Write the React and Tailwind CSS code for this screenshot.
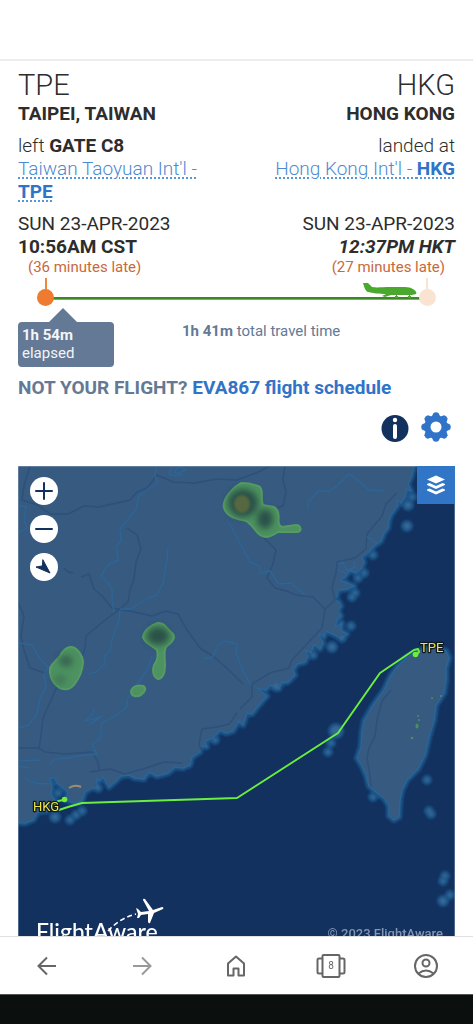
const ISLANDS = [
  [407, 526, 5],
  [373, 555, 4],
  [358, 578, 4],
  [364, 573, 4],
  [355, 593, 4],
  [352, 597, 4],
  [351, 626, 4],
  [342, 638, 4],
  [332, 647, 5],
  [313, 655, 4],
  [408, 505, 5],
  [412, 497, 4],
  [336, 731, 7],
  [331, 743, 4],
  [328, 752, 4],
  [373, 797, 4],
  [427, 780, 4],
  [429, 811, 4],
  [431, 814, 4],
  [445, 876, 4],
  [443, 881, 4],
  [450, 895, 4],
  [443, 901, 5],
  [58, 793, 4],
  [55, 817, 5],
  [70, 820, 4],
  [76, 815, 4],
  [82, 811, 4],
  [98, 788, 4],
  [276, 686, 5],
  [215, 740, 4],
];

const MAINLAND =
  "M10 460H416L411 478L408 484L411 491L407 489L405 497L401 503L397 500L398 505L391 515L389 520L388 528L384 533L381 541L374 546L369 552L362 557L364 562L361 569L356 573L350 570L345 577L340 580L347 583L354 586L347 589L338 590L337 596L334 600L339 602L341 606L338 611L341 616L337 620L335 627L342 623L341 631L347 634L341 639L335 635L326 631L324 637L318 633L323 643L320 649L314 644L311 653L305 650L308 656L305 662L297 664L293 670L295 675L288 682L281 683L279 689L270 685L266 690L257 688L267 696L259 705L252 714L247 713L243 725L239 721L233 731L226 733L220 730L213 738L205 741L207 747L200 746L200 752L192 757L190 765L183 768L175 767L168 773L157 776L149 772L144 779L135 778L129 775L121 776L115 782L109 787L103 777L99 781L96 778L98 788L92 788L85 792L82 801L74 803L66 800L68 792L62 787L57 783L55 778L50 778L52 786L51 795L56 802L47 811L38 812L33 820L25 823L10 822Z";

const TAIWAN =
  "M384 690L390 677L397 667L406 658L414 653L426 649L437 647L446 651L449 658L446 668L446 680L444 693L436 705L434 720L429 737L425 755L418 769L407 780L402 790L400 800L399 817L394 820L389 816L389 806L384 798L377 793L369 786L366 775L362 766L357 758L361 747L362 732L364 721L372 707Z";

const RIVERS = [
  "M156 466L155 476L158 483L149 488L139 496L136 509L129 518L120 529L121 541L116 547L118 560L108 565L101 576L112 588L112 600L114 612",
  "M120 610L119 621L112 640L110 651L105 655L105 664L96 672L88 674",
  "M168 547L167 560L163 583L157 595L149 598L138 604L131 609L120 609",
  "M18 643L32 645L39 657L48 667L44 675L46 687L40 698L37 714L29 725L18 728",
  "M152 656L148 669L139 681L133 690L127 700L127 707L118 714L102 723L100 739L92 744L97 754L79 756L67 758L55 759L50 764",
  "M228 521L239 541L250 562L259 566L261 573L270 571L279 584L291 583L305 595",
  "M308 509L308 502L319 491L329 491L337 486L349 474L357 480L369 490L383 491",
  "M203 658L212 658L218 645L225 641L237 644L236 652L243 671L251 685",
  "M18 505L26 507L24 520L27 528L18 533",
  "M94 708L93 714L85 721L101 717L90 724L97 719L103 715",
  "M18 761L40 760 M18 766L30 768 M24 777L31 782L42 784L49 783",
  "M172 467L169 474L176 476L181 472L186 470L180 466L174 472L183 476",
  "M367 537L372 539L377 544 M338 564L343 562L347 571L355 567L354 562 M338 570L346 573",
];

const BORDERS = [
  "M30 466L24 486L22 500L38 505L50 514L68 514L84 506L99 507L130 500L137 492L147 488L157 475L173 482L195 483L216 479L237 480L256 473L270 466",
  "M127 528L137 535L141 549L136 562L134 579L130 590L128 602L119 610L105 620L86 636L85 648L79 665L60 680L51 700L43 718L39 750",
  "M64 568L68 572L73 573 M81 577L89 574L94 589L103 597L112 608L135 612L152 616L166 611L178 614L187 630L200 648L214 657L230 671L243 684",
  "M18 602L24 616L21 636L24 650L30 668L45 673",
  "M285 466L283 480L286 491L283 506L270 510",
  "M264 538L276 550L273 564L267 578L275 588L287 591L296 595L313 597L325 609L322 628L306 645L292 660L289 668L270 673L252 684L252 697L240 709",
  "M325 609L335 600L332 587L336 573L337 562L355 558L366 549L367 534L382 516L386 504L397 493",
  "M237 713L229 724L217 727L202 729L199 744L201 750",
  "M18 748L39 748L45 752L65 754L92 752L98 762L99 770 M90 772L110 769L125 774L143 769L164 762L182 763",
  "M391 690L382 701L377 720L375 736L369 748L367 758L370 776L371 787",
];

function FlightMap() {
  return (
    <svg viewBox="18 466 437 480" className="block w-full" role="img" aria-label="Flight track from TPE to HKG">
      <defs>
        <filter id="soft" x="-20%" y="-20%" width="140%" height="140%">
          <feGaussianBlur stdDeviation="1" />
        </filter>
        <filter id="softer" x="-40%" y="-40%" width="180%" height="180%">
          <feGaussianBlur stdDeviation="3" />
        </filter>
      </defs>
      <rect x="18" y="466" width="437" height="480" fill="#12315f" />

      {/* shallow water around the coasts */}
      <g fill="#1f5588" stroke="#1f5588" strokeWidth="6" strokeLinejoin="round" filter="url(#soft)">
        <path d={MAINLAND} />
        <path d={TAIWAN} />
        {ISLANDS.map(([x, y, r]) => (
          <circle key={`${x}-${y}`} cx={x} cy={y} r={r} strokeWidth="2" />
        ))}
      </g>

      <g fill="#365a80" stroke="#2b6496" strokeWidth="1.4" strokeLinejoin="round">
        <path d={MAINLAND} />
        <path d={TAIWAN} />
      </g>
      <g fill="#376894" filter="url(#soft)">
        {ISLANDS.map(([x, y, r]) => (
          <circle key={`${x}-${y}`} cx={x} cy={y} r={r - 2} />
        ))}
      </g>

      <g fill="none" stroke="#2e507a" strokeWidth="1.5" strokeLinejoin="round">
        {BORDERS.map((d) => (
          <path key={d} d={d} />
        ))}
      </g>
      <g fill="none" stroke="#2d6596" strokeWidth="1.4" strokeLinejoin="round">
        {RIVERS.map((d) => (
          <path key={d} d={d} />
        ))}
      </g>

      {/* weather radar */}
      <g fill="#4d9260" stroke="#559c62" strokeWidth="2" strokeLinejoin="round">
        <path d="M241 483C248 483 254 484 260 487C264 492 260 499 263 505C268 507 275 504 278 512C280 518 276 524 282 527L296 525C301 525 302 531 298 532L278 532C272 536 266 539 260 535C254 530 251 523 246 521C239 519 227 518 224 508C222 500 232 488 241 483Z" />
        <path d="M158 623C164 622 167 629 173 634C176 639 171 643 167 646C163 649 165 657 165 666C165 674 162 679 158 679C153 677 152 670 154 665C158 660 158 654 157 650C152 645 144 643 143 637C144 631 150 625 158 623Z" />
        <path d="M70 647C76 646 83 655 83 663C82 674 78 680 74 685C70 690 63 691 57 686C52 682 49 675 50 668C53 662 57 660 60 656C62 652 65 648 70 647Z" />
        <path d="M131 691C133 686 138 685 143 686C147 688 145 692 141 695C137 697 131 697 131 691Z" />
      </g>
      <g fill="#2c5148" filter="url(#softer)">
        <ellipse cx="243" cy="503" rx="15" ry="14" />
        <ellipse cx="265" cy="519" rx="8" ry="10" />
        <ellipse cx="158" cy="636" rx="11" ry="9" />
        <ellipse cx="66" cy="661" rx="7" ry="6" opacity="0.7" />
        <ellipse cx="60" cy="680" rx="6" ry="5" opacity="0.4" />
      </g>
      <ellipse cx="242" cy="504" rx="8" ry="9" fill="#56683f" filter="url(#soft)" />
      <path d="M69 788Q75 784 81 787" fill="none" stroke="#a08c6c" strokeWidth="2" />
      <g fill="#4b9058">
        <circle cx="418" cy="716" r="1" />
        <circle cx="419" cy="720" r="1" />
        <ellipse cx="417" cy="726" rx="1.5" ry="2.5" />
        <circle cx="412" cy="738" r="1.3" />
        <circle cx="432" cy="698" r="1" />
        <circle cx="441" cy="696" r="1" />
      </g>

      {/* flight track */}
      <g fill="none" stroke="#6bee3f" strokeWidth="2" strokeLinejoin="round" strokeLinecap="round">
        <path d="M64 800L58 801L54 806L59 810L68 807L82 803L237 798L338 733L380 673L414 650L418 649L419 652L416 655" />
      </g>
      <circle cx="64.5" cy="799.5" r="2.8" fill="#6bee3f" />
      <circle cx="415.5" cy="654.5" r="2.8" fill="#6bee3f" />
      <g
        fontFamily="Roboto, sans-serif"
        fontSize="13"
        fill="#eee547"
        stroke="#101820"
        strokeWidth="2.5"
        strokeLinejoin="round"
        paintOrder="stroke"
      >
        <text x="420" y="652">TPE</text>
        <text x="33" y="811">HKG</text>
      </g>
      <path d="M18 466V946M455 466V946M18 466H455" stroke="#8aa0bb" strokeWidth="1" />
    </svg>
  );
}

function MapButton({ label, children }) {
  return (
    <button type="button" aria-label={label} className="size-7 rounded-full bg-white">
      <svg viewBox="0 0 28 28" className="size-7" fill="none" stroke="#12315f" strokeWidth="2" strokeLinecap="round">
        {children}
      </svg>
    </button>
  );
}

function Progress() {
  return (
    <div className="relative mt-0.5 h-7">
      <div className="absolute inset-x-7 top-[19px] h-[3px] border-b border-[#6fb860] bg-[#3a8a22]" />
      <div className="absolute left-[27px] top-0 h-3 w-0.5 bg-[#f0873f]" />
      <div className="absolute left-[19px] top-[11px] size-[17px] rounded-full bg-[#ee7b30]" />
      <div className="absolute right-[27px] top-0 h-3 w-0.5 bg-[#fbe3d2]" />
      <div className="absolute right-[19px] top-[11px] size-[17px] rounded-full bg-[#fbe3d2]" />
      <svg viewBox="0 0 54 17" className="absolute right-[38px] top-1 h-[17px] w-[54px]" fill="#4ba82e">
        <path d="M0 1L5 1L9 5C14 6 20 5 27 5L42 5C48 5 53 8 53.5 11C53 13 48 13 44 13L28 13L22 15L19 14L23 12C16 12 9 11 5 10C2 9 1 4 0 1Z" />
        <path d="M33 12h1v2h1v2h-3v-2h1zM46 12h1v2h1v2h-3v-2h1z" />
      </svg>
    </div>
  );
}

const LINK = "text-[#4b8ad0] underline decoration-[#5795d6] decoration-dotted decoration-[1.5px] underline-offset-2";

export default function App() {
  return (
    <div className="flex h-screen flex-col overflow-hidden bg-white font-['Roboto',sans-serif] text-[#2d2d2d]">
      <header className="h-[61px] shrink-0 border-b-2 border-[#ececec]" />

      <main className="min-h-0 flex-1 overflow-hidden px-[18px] pt-2">
        <div className="flex justify-between text-[19px]/[23px]">
          <section>
            <h2 className="text-[29px]/8 font-light">TPE</h2>
            <p className="mt-px font-bold">TAIPEI, TAIWAN</p>
            <p className="mt-[9px] font-light">
              left <b className="font-bold">GATE C8</b>
            </p>
            <p className="h-[46px] max-w-[190px] font-light">
              <a href="#tpe" className={LINK}>
                Taiwan Taoyuan Int'l - <b className="font-bold text-[#2f74c8]">TPE</b>
              </a>
            </p>
            <p className="mt-[9px]">SUN 23-APR-2023</p>
            <p className="font-bold">10:56AM CST</p>
            <p className="pl-[10px] text-[15px]/[18px] text-[#c8693a]">(36 minutes late)</p>
          </section>
          <section className="text-right">
            <h2 className="text-[29px]/8 font-light">HKG</h2>
            <p className="mt-px font-bold">HONG KONG</p>
            <p className="mt-[9px] font-light">landed at</p>
            <p className="h-[46px] font-light">
              <a href="#hkg" className={LINK}>
                Hong Kong Int'l - <b className="font-bold text-[#2f74c8]">HKG</b>
              </a>
            </p>
            <p className="mt-[9px]">SUN 23-APR-2023</p>
            <p className="font-bold italic">12:37PM HKT</p>
            <p className="pr-[10px] text-[15px]/[18px] text-[#c8693a]">(27 minutes late)</p>
          </section>
        </div>

        <Progress />

        <div className="mt-4 flex text-[15px]/[18px] text-[#647995]">
          <div className="relative h-[45px] w-24 rounded bg-[#647995] px-1 pt-1 text-[#f3f5f8]">
            <svg viewBox="0 0 30 15" className="absolute -top-[14px] left-[30px] h-[15px] w-[30px]" fill="#647995">
              <path d="M0 15L15 0L30 15Z" />
            </svg>
            <b className="block">1h 54m</b>
            elapsed
          </div>
          <p className="pl-[68px]">
            <b>1h 41m</b> total travel time
          </p>
        </div>

        <p className="mt-[9px] text-[19px]/[23px] font-bold text-[#647995]">
          NOT YOUR FLIGHT?{" "}
          <a href="#schedule" className="text-[#2f74c8]">
            EVA867 flight schedule
          </a>
        </p>

        <div className="mt-[13px] flex h-[34px] justify-end gap-3 pr-1">
          <button type="button" aria-label="Information" className="h-[30px] w-7">
            <svg viewBox="0 0 28 30" className="h-[30px] w-7">
              <circle cx="14" cy="16.5" r="13.5" fill="#12315f" />
              <circle cx="14" cy="8" r="2.2" fill="#fff" />
              <rect x="12" y="12" width="4" height="15" rx="2" fill="#fff" />
            </svg>
          </button>
          <button type="button" aria-label="Settings" className="size-[30px]">
            <svg viewBox="0 0 30 30" className="size-[30px]">
              <g fill="#2f74c8">
                <circle cx="15" cy="15" r="11.5" />
                {[0, 45, 90, 135, 180, 225, 270, 315].map((a) => (
                  <path key={a} d="M10.5 5L12.5 1Q15 -0.5 17.5 1L19.5 5Z" transform={`rotate(${a} 15 15)`} />
                ))}
              </g>
              <circle cx="15" cy="15" r="5.5" fill="#fff" />
            </svg>
          </button>
        </div>

        <div className="relative mt-5">
          <FlightMap />
          <div className="absolute left-3 top-[11px] flex flex-col gap-[10px]">
            <MapButton label="Zoom in">
              <path d="M6 14H22M14 6V22" />
            </MapButton>
            <MapButton label="Zoom out">
              <path d="M6 14H22" />
            </MapButton>
            <MapButton label="Center on flight">
              <path d="M13 7L20 20L6 14L12 13Z" fill="#12315f" strokeWidth="1" strokeLinejoin="round" />
            </MapButton>
          </div>
          <button
            type="button"
            aria-label="Map layers"
            className="absolute right-0 top-0 flex size-[38px] items-center justify-center bg-[#3175c6]"
          >
            <svg viewBox="0 0 18 20" className="h-5 w-[18px]" fill="#fff">
              <path d="M9 0.5L18 4.5L9 8.5L0 4.5Z" />
              <path d="M0 9L2.5 8L9 11L15.5 8L18 9V10L9 14L0 10Z" />
              <path d="M0 14.5L2.5 13.5L9 16.5L15.5 13.5L18 14.5V15.5L9 19.5L0 15.5Z" />
            </svg>
          </button>
          <div className="absolute bottom-0.5 left-[18px] font-['Lato',sans-serif] text-[23px]/[26px] font-medium text-white">
            FlightAware
            <svg viewBox="0 0 60 42" className="absolute -top-5 left-[68px] h-[42px] w-[60px]" fill="#fff">
              <path d="M4 33Q16 20 32 16" fill="none" stroke="#fff" strokeWidth="1.5" strokeDasharray="5 3" />
              <path d="M32 10L34 11L37 14L45 13L39 2Q39 0 41 1L49 12L58 9Q60 9 59 11L50 15L46 25Q45 26 44 24L44 16L37 17L35 20L33 20L34 16Z" />
            </svg>
          </div>
          <p className="absolute bottom-0.5 right-3 text-[13px]/5 font-medium text-[#8395b0]">© 2023 FlightAware</p>
        </div>
      </main>

      <nav className="z-10 grid h-[58px] shrink-0 grid-cols-5 items-center border-b border-b-[#555] bg-white text-[#666] shadow-[0_-1px_0_#e0e0e0]">
        <button type="button" aria-label="Back" className="flex justify-center">
          <svg viewBox="0 0 20 20" className="size-5" fill="none" stroke="currentColor" strokeWidth="2">
            <path d="M19 10H2M10 1.5L1.5 10L10 18.5" />
          </svg>
        </button>
        <button type="button" aria-label="Forward" className="flex justify-center text-[#999]">
          <svg viewBox="0 0 20 20" className="size-5" fill="none" stroke="currentColor" strokeWidth="2">
            <path d="M1 10H18M10 1.5L18.5 10L10 18.5" />
          </svg>
        </button>
        <button type="button" aria-label="Home" className="flex justify-center">
          <svg viewBox="0 0 20 22" className="h-[22px] w-5" fill="none" stroke="currentColor" strokeWidth="2" strokeLinejoin="round">
            <path d="M2 8.5L10 1.5L18 8.5V20.5H12.5V13.5H7.5V20.5H2Z" />
          </svg>
        </button>
        <button type="button" aria-label="Tabs" className="relative flex items-center justify-center">
          <svg viewBox="0 0 30 26" className="h-[26px] w-[30px]" fill="none" stroke="currentColor" strokeWidth="2">
            <rect x="6.5" y="2" width="17" height="22" rx="1" />
            <path d="M6 5.5H3Q1.5 5.5 1.5 7V19Q1.5 20.5 3 20.5H6M24 5.5H27Q28.5 5.5 28.5 7V19Q28.5 20.5 27 20.5H24" />
          </svg>
          <span className="absolute text-[10px]/3">8</span>
        </button>
        <button type="button" aria-label="Account" className="flex justify-center">
          <svg viewBox="0 0 26 26" className="size-[26px]" fill="none" stroke="currentColor" strokeWidth="2">
            <circle cx="13" cy="13" r="11" />
            <circle cx="13" cy="10" r="3.5" />
            <path d="M5.5 20.5Q13 14.5 20.5 20.5" />
          </svg>
        </button>
      </nav>
      <footer className="h-[29px] shrink-0 bg-[#0b100f]" />
    </div>
  );
}
